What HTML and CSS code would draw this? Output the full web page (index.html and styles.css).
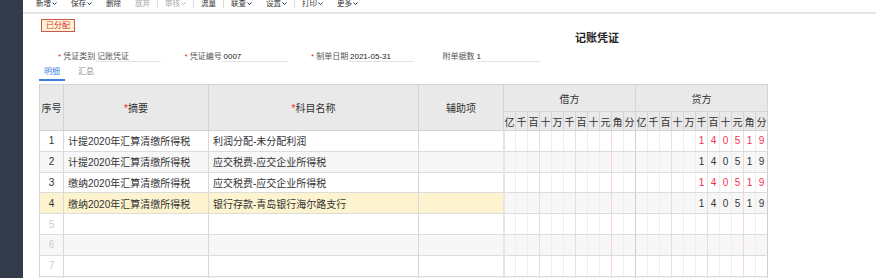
FILE: index.html
```html
<!DOCTYPE html>
<html lang="zh-CN">
<head>
    <meta charset="UTF-8">
    <title>记账凭证</title>
    <link rel="stylesheet" href="styles.css">
</head>
<body>
    <aside class="sidebar"></aside>
    <main class="main">
        <nav class="toolbar">
            <span class="tool">新增<svg class="caret" viewBox="0 0 5 3"><polyline points="0.5,0.5 2.5,2.5 4.5,0.5"/></svg></span>
            <span class="tool">保存<svg class="caret" viewBox="0 0 5 3"><polyline points="0.5,0.5 2.5,2.5 4.5,0.5"/></svg></span>
            <span class="tool">删除</span>
            <span class="tool disabled">放弃</span>
            <span class="sep"></span>
            <span class="tool disabled">审核<svg class="caret" viewBox="0 0 5 3"><polyline points="0.5,0.5 2.5,2.5 4.5,0.5"/></svg></span>
            <span class="sep"></span>
            <span class="tool">流量</span>
            <span class="sep"></span>
            <span class="tool">联查<svg class="caret" viewBox="0 0 5 3"><polyline points="0.5,0.5 2.5,2.5 4.5,0.5"/></svg></span>
            <span class="tool">设置<svg class="caret" viewBox="0 0 5 3"><polyline points="0.5,0.5 2.5,2.5 4.5,0.5"/></svg></span>
            <span class="sep"></span>
            <span class="tool">打印<svg class="caret" viewBox="0 0 5 3"><polyline points="0.5,0.5 2.5,2.5 4.5,0.5"/></svg></span>
            <span class="tool">更多<svg class="caret" viewBox="0 0 5 3"><polyline points="0.5,0.5 2.5,2.5 4.5,0.5"/></svg></span>
        </nav>

        <section class="voucher">
            <div class="status-row"><span class="status-tag">已分配</span></div>
            <h1 class="voucher-title">记账凭证</h1>

            <div class="voucher-form">
                <div class="field"><label><em>*</em> 凭证类别</label><span class="value muted">记账凭证</span></div>
                <div class="field"><label><em>*</em> 凭证编号</label><span class="value">0007</span></div>
                <div class="field"><label><em>*</em> 制单日期</label><span class="value">2021-05-31</span></div>
                <div class="field"><label>附单据数</label><span class="value">1</span></div>
            </div>

            <div class="tabs">
                <span class="tab active">明细</span>
                <span class="tab">汇总</span>
            </div>

            <table class="entries">
                <colgroup>
                    <col class="c-no"><col class="c-summary"><col class="c-account"><col class="c-aux">
                    <col class="c-d"><col class="c-d"><col class="c-d"><col class="c-d"><col class="c-d"><col class="c-d"><col class="c-d"><col class="c-d"><col class="c-d"><col class="c-d"><col class="c-d">
                    <col class="c-d"><col class="c-d"><col class="c-d"><col class="c-d"><col class="c-d"><col class="c-d"><col class="c-d"><col class="c-d"><col class="c-d"><col class="c-d"><col class="c-d">
                </colgroup>
                <thead>
                    <tr class="head-top">
                        <th rowspan="2">序号</th>
                        <th rowspan="2"><em>*</em>摘要</th>
                        <th rowspan="2"><em>*</em>科目名称</th>
                        <th rowspan="2">辅助项</th>
                        <th colspan="11" class="side">借方</th>
                        <th colspan="11" class="side">贷方</th>
                    </tr>
                    <tr class="head-digits">
                        <th>亿</th><th>千</th><th>百</th><th>十</th><th>万</th><th>千</th><th>百</th><th>十</th><th>元</th><th>角</th><th>分</th>
                        <th>亿</th><th>千</th><th>百</th><th>十</th><th>万</th><th>千</th><th>百</th><th>十</th><th>元</th><th>角</th><th>分</th>
                    </tr>
                </thead>
                <tbody>
                    <tr class="negative">
                        <td class="no">1</td><td class="text">计提2020年汇算清缴所得税</td><td class="text">利润分配-未分配利润</td><td class="text"></td>
                        <td></td><td></td><td></td><td></td><td></td><td></td><td></td><td></td><td></td><td></td><td></td>
                        <td></td><td></td><td></td><td></td><td></td><td>1</td><td>4</td><td>0</td><td>5</td><td>1</td><td>9</td>
                    </tr>
                    <tr>
                        <td class="no">2</td><td class="text">计提2020年汇算清缴所得税</td><td class="text">应交税费-应交企业所得税</td><td class="text"></td>
                        <td></td><td></td><td></td><td></td><td></td><td></td><td></td><td></td><td></td><td></td><td></td>
                        <td></td><td></td><td></td><td></td><td></td><td>1</td><td>4</td><td>0</td><td>5</td><td>1</td><td>9</td>
                    </tr>
                    <tr class="negative">
                        <td class="no">3</td><td class="text">缴纳2020年汇算清缴所得税</td><td class="text">应交税费-应交企业所得税</td><td class="text"></td>
                        <td></td><td></td><td></td><td></td><td></td><td></td><td></td><td></td><td></td><td></td><td></td>
                        <td></td><td></td><td></td><td></td><td></td><td>1</td><td>4</td><td>0</td><td>5</td><td>1</td><td>9</td>
                    </tr>
                    <tr class="current">
                        <td class="no">4</td><td class="text">缴纳2020年汇算清缴所得税</td><td class="text">银行存款-青岛银行海尔路支行</td><td class="text"></td>
                        <td></td><td></td><td></td><td></td><td></td><td></td><td></td><td></td><td></td><td></td><td></td>
                        <td></td><td></td><td></td><td></td><td></td><td>1</td><td>4</td><td>0</td><td>5</td><td>1</td><td>9</td>
                    </tr>
                    <tr class="empty">
                        <td class="no">5</td><td class="text"></td><td class="text"></td><td class="text"></td>
                        <td></td><td></td><td></td><td></td><td></td><td></td><td></td><td></td><td></td><td></td><td></td>
                        <td></td><td></td><td></td><td></td><td></td><td></td><td></td><td></td><td></td><td></td><td></td>
                    </tr>
                    <tr class="empty">
                        <td class="no">6</td><td class="text"></td><td class="text"></td><td class="text"></td>
                        <td></td><td></td><td></td><td></td><td></td><td></td><td></td><td></td><td></td><td></td><td></td>
                        <td></td><td></td><td></td><td></td><td></td><td></td><td></td><td></td><td></td><td></td><td></td>
                    </tr>
                    <tr class="empty">
                        <td class="no">7</td><td class="text"></td><td class="text"></td><td class="text"></td>
                        <td></td><td></td><td></td><td></td><td></td><td></td><td></td><td></td><td></td><td></td><td></td>
                        <td></td><td></td><td></td><td></td><td></td><td></td><td></td><td></td><td></td><td></td><td></td>
                    </tr>
                    <tr class="empty">
                        <td class="no"></td><td class="text"></td><td class="text"></td><td class="text"></td>
                        <td></td><td></td><td></td><td></td><td></td><td></td><td></td><td></td><td></td><td></td><td></td>
                        <td></td><td></td><td></td><td></td><td></td><td></td><td></td><td></td><td></td><td></td><td></td>
                    </tr>
                </tbody>
            </table>
        </section>
    </main>
</body>
</html>
```

FILE: styles.css
```css
body {
    margin: 0;
    display: flex;
    height: 100vh;
    overflow: hidden;
    background-color: #fff;
    font-family: 'Liberation Sans', 'Noto Sans CJK SC', sans-serif;
    color: #333;
}

.sidebar {
    width: 23px;
    flex-shrink: 0;
    background-color: #323c4b;
}

.main {
    flex: 1;
    min-width: 0;
}

/* 顶部工具栏 */
.toolbar {
    display: flex;
    align-items: flex-start;
    height: 12px;
    padding-left: 6px;
    border-bottom: 2px solid #e6e6e6;
    overflow: hidden;
    font-size: 7.5px;
}

.tool {
    display: flex;
    align-items: center;
    padding: 0 7px;
    margin-top: -1px;
    line-height: 9px;
    white-space: nowrap;
}

.tool.disabled {
    color: #aaa;
}

.caret {
    width: 5px;
    height: 3px;
    margin-left: 1px;
    fill: none;
    stroke: currentColor;
    stroke-width: 1;
}

.sep {
    width: 1px;
    height: 8px;
    background-color: #ddd;
}

/* 凭证区域 */
.voucher {
    padding-left: 16px;
}

.status-row {
    height: 13px;
}

.status-tag {
    display: inline-block;
    margin-left: 2px;
    height: 11px;
    line-height: 11px;
    padding: 0 4px;
    font-size: 8px;
    color: #d9363e;
    background-color: #fdf2d3;
    border: 1px solid #c9574c;
}

.voucher-title {
    margin: 4px 0 0 536px;
    font-size: 11px;
    line-height: 14px;
    font-weight: bold;
    color: #222;
}

.voucher-form {
    display: flex;
    gap: 23.5px;
    margin: 6px 0 0 19px;
    font-size: 8px;
}

.field {
    display: flex;
    align-items: flex-end;
}

.field label {
    width: 37px;
    padding-right: 1px;
    text-align: right;
    line-height: 11px;
    color: #555;
    white-space: nowrap;
}

.field em,
.entries em {
    font-style: normal;
    color: #f5222d;
}

.value {
    width: 65px;
    height: 11px;
    line-height: 11px;
    padding-left: 1px;
    box-sizing: border-box;
    border-bottom: 1px solid #e3e3e3;
    color: #222;
}

.value.muted {
    color: #555;
}

.tabs {
    display: flex;
    gap: 8px;
    margin-top: 4px;
    font-size: 8px;
}

.tab {
    padding: 0 5px 1px;
    line-height: 12px;
    color: #888;
    border-bottom: 2px solid transparent;
}

.tab.active {
    color: #3b7fe0;
    border-bottom-color: #3b7fe0;
}

/* 分录表格 */
.entries {
    margin-top: 3px;
    border-collapse: collapse;
    table-layout: fixed;
    width: 728px;
    font-size: 10px;
    color: #333;
}

.c-no { width: 24px; }
.c-summary { width: 145px; }
.c-account { width: 210px; }
.c-aux { width: 85px; }
.c-d { width: 12px; }

.entries th {
    background-color: #e9e9e9;
    border: 1px solid #d4d4d4;
    font-weight: normal;
    padding: 0;
    white-space: nowrap;
}

.head-top th {
    height: 26px;
}

.head-digits th {
    height: 18px;
}

.entries td {
    height: 19.8px;
    padding: 0;
    text-align: center;
    border-left: 1px solid #eee;
    border-bottom: 1px solid #dcdcdc;
    white-space: nowrap;
    overflow: hidden;
}

.entries td.no {
    border-left: 1px solid #d4d4d4;
}

.entries td.text {
    text-align: left;
    padding: 0 4px;
    border-left: 1px solid #d8d8d8;
}

.entries td:nth-child(5) {
    border-left: 2px solid #e4e4e4;
}

.entries td:nth-child(8),
.entries td:nth-child(11),
.entries td:nth-child(19),
.entries td:nth-child(22) {
    border-left-color: #d3e4f3;
}

.entries td:nth-child(14),
.entries td:nth-child(25) {
    border-left-color: #f6d5d5;
}

.entries td:nth-child(16) {
    border-left: 1px solid #cfcfcf;
}

.entries td:last-child {
    border-right: 1px solid #cfcfcf;
}

.entries tbody tr:nth-child(even) td {
    background-color: #f7f7f7;
}

.entries tbody tr.current td.no,
.entries tbody tr.current td.text {
    background-color: #fdf4cf;
}

.entries tr.negative td {
    color: #f5314f;
}

.entries tr.negative td.no,
.entries tr.negative td.text {
    color: #333;
}

.entries tr.empty td.no {
    color: #ccc;
}
```
